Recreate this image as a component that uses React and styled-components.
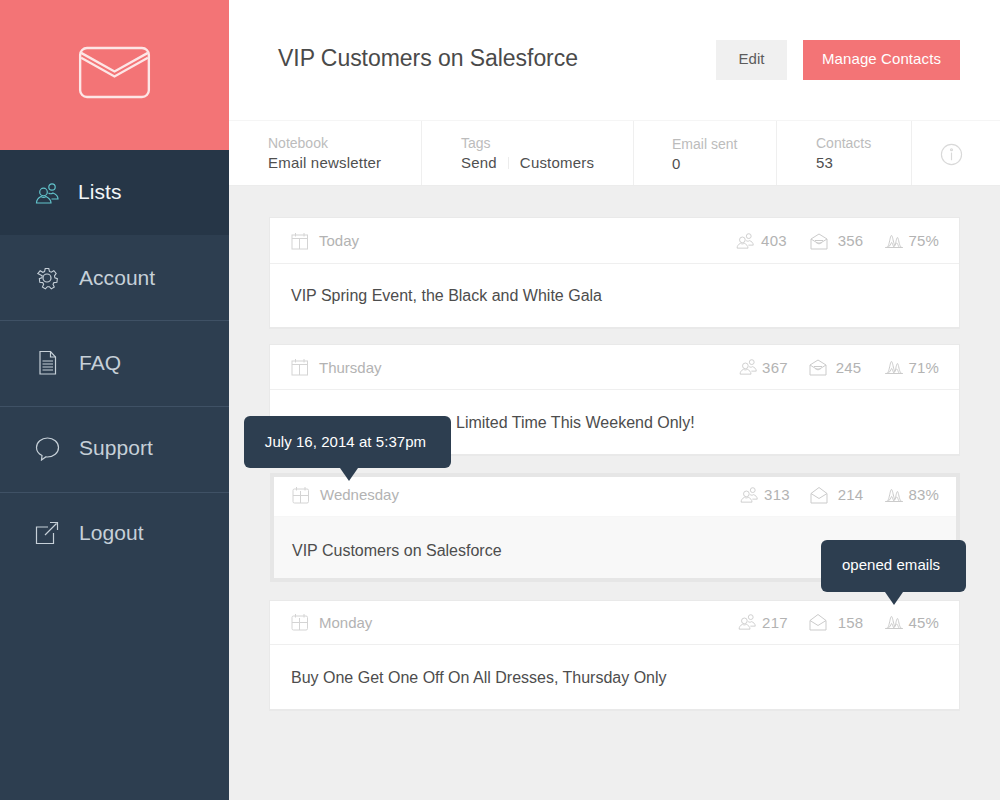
import React from "react";
import styled, { createGlobalStyle } from "styled-components";

const Global = createGlobalStyle`
  html, body { margin: 0; padding: 0; background: #efefef; }
  * { box-sizing: border-box; }
  body { font-family: "Liberation Sans", Arial, sans-serif; }
`;
const Page = styled.div`display: flex; width: 1000px; height: 800px; overflow: hidden; background: #efefef;`;
const Sidebar = styled.aside`width: 229px; flex: none; background: #2d3e50; display: flex; flex-direction: column;`;
const Logo = styled.div`height: 150px; background: #f37476; display: flex; align-items: center; justify-content: center; padding-bottom: 5px;`;
const NavItem = styled.a`
  height: ${p => p.$active ? 85 : 86}px; display: flex; align-items: center; gap: ${p => p.$active ? 17 : 18}px; padding: 0 0 ${p => p.$nudge}px 35px;
  background: ${p => p.$active ? "#263647" : "transparent"};
  color: ${p => p.$active ? "#f2f6f8" : "#c6d0d8"};
  border-bottom: ${p => p.$active ? "none" : "1px solid #3f5165"};
  border-bottom-color: ${p => p.$last ? "transparent" : "#3f5165"};
  font-size: 21px; letter-spacing: .05px;
`;
const NavIcon = styled.svg`width: 26px; height: 26px; flex: none; fill: none; stroke: ${p => p.$active ? "#62c3cb" : "#c6d0d8"}; stroke-width: 1.2;`;
const Main = styled.main`flex: 1; display: flex; flex-direction: column; min-width: 0;`;
const Header = styled.header`height: 120px; background: #fff; display: flex; align-items: center; padding: 0 40px 0 49px;`;
const Title = styled.h1`flex: 1; margin: 0 0 3px; font-size: 23px; font-weight: 400; color: #4a4a4a; letter-spacing: -.05px;`;
const Button = styled.button`
  height: 40px; border: 0; padding: 0 0 3px; margin-left: ${p => p.$primary ? 16 : 0}px; width: ${p => p.$primary ? 157 : 71}px;
  background: ${p => p.$primary ? "#f37476" : "#f0f0f0"}; color: ${p => p.$primary ? "#fff" : "#5c5c5c"};
  font: 15px "Liberation Sans", Arial, sans-serif; letter-spacing: .1px;
`;
const InfoBar = styled.section`height: 66px; background: #fff; display: flex; border-top: 1px solid #f5f5f5; border-bottom: 1px solid #ececec;`;
const InfoCell = styled.div`
  width: ${p => p.$w}px; flex: none; padding: ${p => p.$top}px 0 0 ${p => p.$left}px; border-right: 1px solid #efefef;
  &:last-child { border-right: 0; flex: 1; display: flex; align-items: center; padding: 3px 0 0 28px; }
`;
const InfoLabel = styled.div`font-size: 14px; line-height: 17px; color: #bcbcbc;`;
const InfoValue = styled.div`margin-top: 1px; font-size: 15px; letter-spacing: .2px; line-height: 20px; color: #4f4f4f; display: flex; align-items: center;`;
const TagSep = styled.span`width: 1px; height: 12px; background: #ececec; margin: 0 11px;`;
const InfoIcon = styled.svg`width: 23px; height: 23px; fill: none; stroke: #d9d9d9; stroke-width: 1.2;`;
const Content = styled.div`flex: 1; padding: 31px 40px 0 40px; display: flex; flex-direction: column;`;
const Card = styled.article`
  position: relative; flex: none; height: ${p => p.$h}px; margin: 0 0 ${p => p.$mb}px ${p => p.$selected ? 1 : 0}px; background: ${p => p.$selected ? "#f8f8f8" : "#fff"};
  border: ${p => p.$selected ? "4px solid #e6e6e6" : "1px solid #e9e9e9"};
  ${p => p.$selected ? "" : "border-bottom-width: 2px;"}
  display: flex; flex-direction: column;
`;
const CardHead = styled.div`
  height: ${p => p.$h}px; flex: none; background: #fff; display: flex; align-items: center;
  padding: 0 ${p => p.$selected ? 17 : 20}px ${p => p.$pb}px ${p => p.$selected ? 18 : 21}px; border-bottom: 1px solid ${p => p.$selected ? "#f6f6f6" : "#efefef"};
`;
const Day = styled.span`flex: 1; display: flex; align-items: center; gap: 10px; font-size: 15px; color: #b3b3b3;`;
const DayIcon = styled.svg`width: 18px; height: 18px; fill: none; stroke: #d4d4d4; stroke-width: 1;`;
const Stat = styled.span`display: flex; align-items: center; gap: ${p => p.$gap}px; margin-left: ${p => p.$ml}px; font-size: 15px; color: #b3b3b3; letter-spacing: .2px;`;
const StatIcon = styled.svg`width: 18px; height: 18px; fill: none; stroke: #cbcbcb; stroke-width: ${p => p.$sw || 1};`;
const CardBody = styled.div`
  flex: 1; display: flex; align-items: center; padding: ${p => p.$pt}px 0 0 ${p => p.$indent}px;
  font-size: 16px; color: #4d4d4d;
`;
const Tooltip = styled.div`
  position: absolute; z-index: 2; left: ${p => p.$left}px; top: ${p => p.$top}px; width: ${p => p.$w}px; height: 52px; border-radius: 6px; background: #2d3e50; color: #fff;
  font-size: 15px; letter-spacing: .05px; padding: ${p => p.$pt}px ${p => p.$pr}px 0 0; text-align: center;
  &::after { content: ""; position: absolute; left: ${p => p.$arrow}px; top: 52px; border: 9px solid transparent; border-bottom: 0; border-top: 13px solid #2d3e50; }
`;

const Users = () => <><circle cx="8.500" cy="14" r="3.800"/><circle cx="17" cy="9" r="3.200"/><path d="M1.500 25c0-3 1.500-5 4.500-6.500 1.500 1.200 3.500 1.200 5 0 3 1.500 5 3.500 5 6.500z"/><path d="M13.500 15c1.500 1 3 1 4.500 0 2.500 1 5 2.500 5 6h-6.500"/></>;
const Gear = () => <><circle cx="12" cy="13" r="4"/><path d="M11 2.500h4l.7 3.200 2 .9 2.900-1.700 2.600 3-1.900 2.700.5 2.200 2.700 1-.5 3.900-3.300.4-1 1.900 1.400 3-3.300 2.100-2.200-2.400h-2.200l-2.200 2.400-3.300-2.100 1.400-3-1-1.900-3.300-.4-.5-3.900 2.700-1 .5-2.200L2.800 8l2.600-3 2.900 1.700 2-.9z" transform="translate(.3 1.300) scale(.9)"/></>;
const Doc = () => <><path d="M5 1.500h10.500L20.500 7v17H5z"/><path d="M15.500 1.500V7h5M7.500 11h10.500M7.500 14h10.500M7.500 17h10.500M7.500 20h10.500"/></>;
const Bubble = () => <path d="M7 20.500C3.500 18.800 1.500 15.900 1.500 12.500 1.500 7 6.500 3 12.500 3s11 4 11 9.500-5 9.500-11 9.500c-.6 0-1.200 0-1.800-.1L6.500 25z"/>;
const Ext = () => <><path d="M13 7H1.500v16.500h17V13"/><path d="M10 15 21.500 3.500M15 2.500h7.500V10"/></>;

const nav = [["Lists", Users, 2, true, false, "0 1 26 26"], ["Account", Gear, 0], ["FAQ", Doc, 2], ["Support", Bubble, 3], ["Logout", Ext, 5, false, true]];

const Chart = () => <path d="M.5 15.500c2 0 2.500-.5 3.500-4s1.500-8 2.500-8 1.500 5 2.500 8 1 2 1.500 0 1.200-6 2-6 1.500 6 2.500 8 1.500 2 2.500 2zM.5 15.500h17M3 15.500c1.500-1 3-4 3.500-5s1.500 4 3 5M8 15.500c1.500-1 2.500-4 3.500-4.500s1.500 3 3 4.500"/>;
const CalA = () => <><rect x="1" y="3" width="15.500" height="14"/><path d="M1 6.500h15.500M8.500 6.500V17M4.500 1v3.500M13 1v3.500"/></>;
const CalB = () => <><rect x="1" y="3" width="15.500" height="14" rx="1.500"/><path d="M1 9.500h15.500M8.500 5V17M4.500 1v3.500M13 1v3.500"/></>;
const MailA = () => <><path d="M1 7l8-5 8 5v10H1z"/><path d="M1 7l8 5 8-5M5 8.500h8M6.500 11h5"/></>;
const MailB = () => <path d="M1 7.500 9 1.500l8 6v9.500H1zM1 7.500l8 5 8-5"/>;

const rows = [
  { day: "Today", h: 112, mb: 15, hh: 46, hp: 0, bp: 0, Cal: CalA, Mail: MailA, a: "403", b: "356", c: "75%", g: [7, 10], m: [23, 22], text: "VIP Spring Event, the Black and White Gala", indent: 21 },
  { day: "Thursday", h: 112, mb: 17, hh: 45, hp: 0, bp: 2, Cal: CalA, Mail: MailA, a: "367", b: "245", c: "71%", g: [5, 9], m: [21, 24], text: "Limited Time This Weekend Only!", indent: 186 },
  { day: "Wednesday", h: 109, mb: 18, hh: 40, hp: 4, bp: 7, Cal: CalB, Mail: MailB, a: "313", b: "214", c: "83%", g: [6, 10], m: [20, 22], text: "VIP Customers on Salesforce", indent: 18, selected: true,
    tip: { left: -30, top: -61, w: 207, arrow: 96, pt: 17, pr: 4, text: "July 16, 2014 at 5:37pm" } },
  { day: "Monday", h: 111, mb: 0, hh: 44, hp: 1, bp: 2, Cal: CalB, Mail: MailB, a: "217", b: "158", c: "45%", g: [6, 11], m: [21, 22], text: "Buy One Get One Off On All Dresses, Thursday Only", indent: 21,
    tip: { left: 551, top: -61, w: 145, arrow: 64, pt: 16, pr: 5, text: "opened emails" } },
];

export default function App() {
  return (
    <Page>
      <Global />
      <Sidebar>
        <Logo>
          <svg width="73" height="53" viewBox="0 0 74 54" fill="none" stroke="#fde6e6" strokeWidth="2.400">
            <rect x="2" y="2" width="70" height="50" rx="7" />
            <path d="M3 7l34 19L71 7M3 12l34 19 34-19" />
          </svg>
        </Logo>
        {nav.map(([label, Icon, nudge, active, last, box]) => (
          <NavItem key={label} $active={active} $last={last} $nudge={nudge}>
            <NavIcon $active={active} viewBox={box || "0 0 26 26"}><Icon /></NavIcon>
            {label}
          </NavItem>
        ))}
      </Sidebar>
      <Main>
        <Header>
          <Title>VIP Customers on Salesforce</Title>
          <Button>Edit</Button>
          <Button $primary>Manage Contacts</Button>
        </Header>
        <InfoBar>
          <InfoCell $w={193} $top={14} $left={39}><InfoLabel>Notebook</InfoLabel><InfoValue>Email newsletter</InfoValue></InfoCell>
          <InfoCell $w={212} $top={14} $left={39}><InfoLabel>Tags</InfoLabel><InfoValue>Send<TagSep />Customers</InfoValue></InfoCell>
          <InfoCell $w={143} $top={15} $left={38}><InfoLabel>Email sent</InfoLabel><InfoValue>0</InfoValue></InfoCell>
          <InfoCell $w={135} $top={14} $left={39}><InfoLabel>Contacts</InfoLabel><InfoValue>53</InfoValue></InfoCell>
          <InfoCell><InfoIcon viewBox="0 0 24 24"><circle cx="12" cy="12" r="10.500" /><circle cx="12" cy="7" r="1" /><path d="M12 10v8" /></InfoIcon></InfoCell>
        </InfoBar>
        <Content>
          {rows.map(r => (
            <Card key={r.day} $selected={r.selected} $h={r.h} $mb={r.mb}>
              {r.tip && <Tooltip $left={r.tip.left} $top={r.tip.top} $w={r.tip.w} $arrow={r.tip.arrow} $pt={r.tip.pt} $pr={r.tip.pr}>{r.tip.text}</Tooltip>}
              <CardHead $selected={r.selected} $h={r.hh} $pb={r.hp}>
                <Day><DayIcon viewBox="0 0 18 18"><r.Cal /></DayIcon>{r.day}</Day>
                <Stat $gap={r.g[0]} $ml={0}><StatIcon $sw={1.2} viewBox="0 4 24 23"><Users /></StatIcon>{r.a}</Stat>
                <Stat $gap={r.g[1]} $ml={r.m[0]}><StatIcon viewBox="0 0 18 18"><r.Mail /></StatIcon>{r.b}</Stat>
                <Stat $gap={5} $ml={r.m[1]}><StatIcon viewBox="0 0 18 18"><Chart /></StatIcon>{r.c}</Stat>
              </CardHead>
              <CardBody $pt={r.bp} $indent={r.indent}>{r.text}</CardBody>
            </Card>
          ))}
        </Content>
      </Main>
    </Page>
  );
}
